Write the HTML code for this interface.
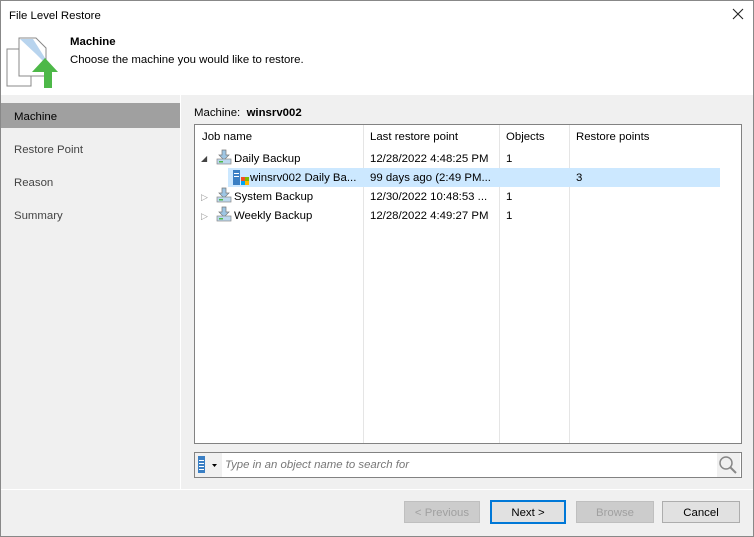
<!DOCTYPE html><html><head><style>
body{margin:0;width:754px;height:537px;font-family:"Liberation Sans",sans-serif;font-size:11.4px;color:#000;position:relative;overflow:hidden;background:#f0f0f0}
.a{position:absolute}
.win{left:0;top:0;width:752px;height:535px;border:1px solid #888;}
.btn{position:absolute;top:501px;height:20px;border:1px solid #adadad;background:#e1e1e1;text-align:center;line-height:22px}
.dis{color:#a0a0a0;background:#cccccc;border-color:#bfbfbf}
.t{position:absolute;white-space:nowrap;margin-top:1px}
</style></head><body>
<div class="a" style="left:0;top:0;width:754px;height:95px;background:#fff"></div>
<div class="a win"></div>
<div class="t" style="left:9px;top:9px">File Level Restore</div>
<svg class="a" style="left:732px;top:8px" width="12" height="12"><path d="M1 1L11 11M11 1L1 11" stroke="#222" stroke-width="1.1"/></svg>
<svg class="a" style="left:6px;top:36px" width="56" height="54">
<path d="M1 13 H16 L25 22 V50 H1 Z" fill="#fff" stroke="#888"/>
<path d="M13 2 H30 L40 12 V40 H13 Z" fill="#fff" stroke="#888"/>
<path d="M14 3 H27 L39 22 V27 L30 18 Z" fill="#b8d4ee"/>
<path d="M39 22 L52 36 H46 V52 H38 V36 H26 Z" fill="#4db848"/>
</svg>
<div class="t" style="left:70px;top:35px;font-weight:bold">Machine</div>
<div class="t" style="left:70px;top:53px">Choose the machine you would like to restore.</div>
<div class="a" style="left:1px;top:95px;width:179px;height:394px;background:#f0f0f0"></div>
<div class="a" style="left:180px;top:95px;width:1px;height:394px;background:#fff"></div>
<div class="a" style="left:1px;top:103px;width:179px;height:25px;background:#a0a0a0"></div>
<div class="t" style="left:14px;top:110px">Machine</div>
<div class="t" style="left:14px;top:143px;color:#444">Restore Point</div>
<div class="t" style="left:14px;top:176px;color:#444">Reason</div>
<div class="t" style="left:14px;top:209px;color:#444">Summary</div>
<div class="t" style="left:194px;top:106px">Machine:&nbsp; <b>winsrv002</b></div>
<div class="a" style="left:194px;top:124px;width:546px;height:318px;background:#fff;border:1px solid #828282"></div>
<div class="a" style="left:363px;top:125px;width:1px;height:318px;background:#e5e5e5"></div>
<div class="a" style="left:499px;top:125px;width:1px;height:318px;background:#e5e5e5"></div>
<div class="a" style="left:569px;top:125px;width:1px;height:318px;background:#e5e5e5"></div>
<div class="t" style="left:202px;top:130px">Job name</div>
<div class="t" style="left:370px;top:130px">Last restore point</div>
<div class="t" style="left:506px;top:130px">Objects</div>
<div class="t" style="left:576px;top:130px">Restore points</div>
<div class="a" style="left:228px;top:168px;width:492px;height:19px;background:#cce8ff"></div>
<div class="t" style="left:201px;top:153px;font-size:8px;color:#444">◢</div>
<div class="t" style="left:201px;top:191px;font-size:9px;color:#999">▷</div>
<div class="t" style="left:201px;top:210px;font-size:9px;color:#999">▷</div>
<svg class="a" style="left:216px;top:149px" width="16" height="16"><path d="M6 1h4v5h3l-5 5-5-5h3z" fill="#9ec6e4" stroke="#777" stroke-width=".7"/><rect x="1" y="10" width="14" height="5" fill="#bcd8ee" stroke="#888" stroke-width=".7"/><rect x="3" y="12" width="4" height="1.5" fill="#4db848"/></svg>
<svg class="a" style="left:216px;top:187px" width="16" height="16"><path d="M6 1h4v5h3l-5 5-5-5h3z" fill="#9ec6e4" stroke="#777" stroke-width=".7"/><rect x="1" y="10" width="14" height="5" fill="#bcd8ee" stroke="#888" stroke-width=".7"/><rect x="3" y="12" width="4" height="1.5" fill="#4db848"/></svg>
<svg class="a" style="left:216px;top:206px" width="16" height="16"><path d="M6 1h4v5h3l-5 5-5-5h3z" fill="#9ec6e4" stroke="#777" stroke-width=".7"/><rect x="1" y="10" width="14" height="5" fill="#bcd8ee" stroke="#888" stroke-width=".7"/><rect x="3" y="12" width="4" height="1.5" fill="#4db848"/></svg>
<svg class="a" style="left:232px;top:169px" width="18" height="17"><rect x="1" y="1" width="7" height="15" fill="#3a7fc4"/><rect x="2" y="4" width="5" height="1" fill="#fff"/><rect x="2" y="7" width="5" height="1" fill="#fff"/><rect x="9" y="8" width="4" height="4" fill="#f25022"/><rect x="13" y="8" width="4" height="4" fill="#7fba00"/><rect x="9" y="12" width="4" height="4" fill="#00a4ef"/><rect x="13" y="12" width="4" height="4" fill="#ffb900"/></svg>
<div class="t" style="left:234px;top:152px">Daily Backup</div>
<div class="t" style="left:250px;top:171px">winsrv002 Daily Ba...</div>
<div class="t" style="left:234px;top:190px">System Backup</div>
<div class="t" style="left:234px;top:209px">Weekly Backup</div>
<div class="t" style="left:370px;top:152px">12/28/2022 4:48:25 PM</div>
<div class="t" style="left:370px;top:171px">99 days ago (2:49 PM...</div>
<div class="t" style="left:370px;top:190px">12/30/2022 10:48:53 ...</div>
<div class="t" style="left:370px;top:209px">12/28/2022 4:49:27 PM</div>
<div class="t" style="left:506px;top:152px">1</div>
<div class="t" style="left:506px;top:190px">1</div>
<div class="t" style="left:506px;top:209px">1</div>
<div class="t" style="left:576px;top:171px">3</div>
<div class="a" style="left:194px;top:452px;width:546px;height:24px;background:#fff;border:1px solid #828282"></div>
<div class="a" style="left:195px;top:453px;width:27px;height:24px;background:#f0f0f0"></div>
<div class="a" style="left:717px;top:453px;width:23px;height:24px;background:#f0f0f0"></div>
<svg class="a" style="left:197px;top:455px" width="24" height="20"><rect x="1" y="1" width="7" height="17" fill="#3a7fc4"/><rect x="2" y="5" width="5" height="1" fill="#fff"/><rect x="2" y="8" width="5" height="1" fill="#fff"/><rect x="2" y="11" width="5" height="1" fill="#fff"/><rect x="2" y="14" width="5" height="1" fill="#fff"/><path d="M15 9h5l-2.5 3z" fill="#000"/></svg>
<svg class="a" style="left:718px;top:455px" width="20" height="20"><circle cx="8" cy="8" r="6" fill="none" stroke="#888" stroke-width="1.5"/><path d="M12 12l6 6" stroke="#888" stroke-width="2"/></svg>
<div class="t" style="left:225px;top:458px;font-style:italic;color:#777">Type in an object name to search for</div>
<div class="a" style="left:1px;top:489px;width:752px;height:1px;background:#fff"></div>
<div class="btn dis" style="left:404px;width:74px">&lt; Previous</div>
<div class="btn" style="left:490px;width:72px;border:2px solid #0078d7;top:500px">Next &gt;</div>
<div class="btn dis" style="left:576px;width:76px">Browse</div>
<div class="btn" style="left:662px;width:76px">Cancel</div>
</body></html>
